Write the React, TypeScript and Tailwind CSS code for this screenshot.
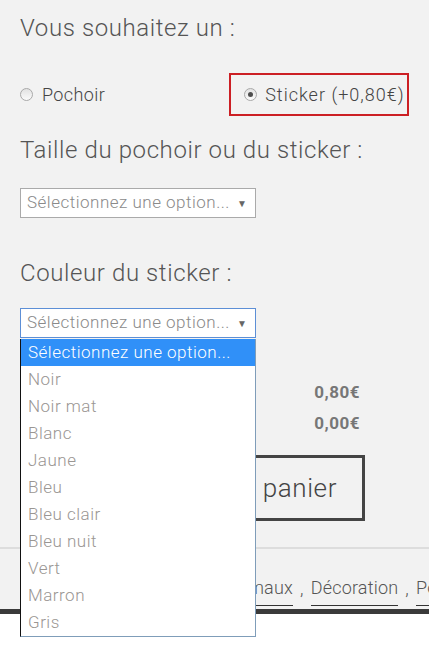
import React from 'react';

const COLORS = [
  'Noir',
  'Noir mat',
  'Blanc',
  'Jaune',
  'Bleu',
  'Bleu clair',
  'Bleu nuit',
  'Vert',
  'Marron',
  'Gris',
];

const FONT = "font-['Roboto',sans-serif]";

const Radio: React.FC<{ checked?: boolean }> = ({ checked }) => (
  <span className="w-[13px] h-[13px] rounded-full border border-[#a9a9a9] bg-gradient-to-b from-[#e2e2e2] to-[#fbfbfb] flex items-center justify-center shrink-0">
    {checked && <span className="w-[5px] h-[5px] rounded-full bg-[#4d4d4d]" />}
  </span>
);

const Select: React.FC<{ focused?: boolean }> = ({ focused }) => (
  <div
    className={`w-[236px] h-[30px] bg-white border flex items-center justify-between pl-[6px] pr-[8px] ${
      focused ? 'border-[#5d8fd6]' : 'border-[#aaaaaa]'
    }`}
  >
    <span className="text-[17px] font-light text-[#8a8a8a] tracking-[0.5px]">Sélectionnez une option...</span>
    <span className="text-[10px] text-[#666]">▼</span>
  </div>
);

export default function App() {
  return (
    <div className={`min-h-[647px] bg-white ${FONT}`}>
      <div className="relative bg-[#f2f2f2] px-5">
        <h2 className="pt-[13px] text-[24px] leading-[30px] font-light text-[#555] tracking-[0.6px]">Vous souhaitez un :</h2>

        {/* Type */}
        <div className="mt-[30px] flex items-center">
          <label className="w-[212px] flex items-center gap-[9px] text-[18px] font-light text-[#444] tracking-[0.4px]">
            <Radio />
            Pochoir
          </label>
          <label className="w-[182px] h-[43px] border-2 border-[#cc1f24] flex items-center gap-[8px] pl-[13px] text-[18px] font-light text-[#444] tracking-[1px]">
            <Radio checked />
            Sticker (+0,80€)
          </label>
        </div>

        <h2 className="mt-[19px] text-[24px] leading-[30px] font-light text-[#555] tracking-[0.6px]">Taille du pochoir ou du sticker :</h2>
        <div className="mt-[23px]">
          <Select />
        </div>

        <h2 className="mt-[40px] text-[24px] leading-[30px] font-light text-[#555] tracking-[0.6px]">Couleur du sticker :</h2>
        <div className="mt-[20px]">
          <Select focused />
        </div>

        {/* Prices */}
        <div className="mt-[42px] w-[340px] flex flex-col gap-[5px] text-[17px] font-bold text-[#777] tracking-[0.5px]">
          <div className="flex justify-between">
            <span className="font-light">Options :</span>
            <span>0,80€</span>
          </div>
          <div className="flex justify-between">
            <span className="font-light">Total :</span>
            <span>0,00€</span>
          </div>
        </div>

        {/* Add to cart */}
        <div className="mt-[19px] flex justify-end pr-[44px]">
          <button className="h-[66px] border-[3px] border-[#444] px-[25px] text-[26px] font-light text-[#444] tracking-[0.6px]">
            Ajouter au panier
          </button>
        </div>

        <div className="-mx-5 mt-[26px] h-[2px] bg-[#dddddd]" />

        {/* Tags */}
        <div className="mt-[28px] -mr-5 flex items-end whitespace-nowrap overflow-hidden text-[18px] font-light text-[#555] leading-[22px] tracking-[0.2px]">
          <span className="shrink-0 w-[273px] text-right border-b border-[#333] pb-[6px]">Animaux</span>
          <span className="shrink-0 mx-[7px] pb-[6px]">,</span>
          <span className="shrink-0 border-b border-[#333] pb-[6px]">Décoration</span>
          <span className="shrink-0 mx-[7px] pb-[6px]">,</span>
          <span className="shrink-0 border-b border-[#333] pb-[6px]">Pochoirs</span>
        </div>
        <div className="-mx-5 mt-[3px] h-[5px] bg-[#3a3a3a]" />

        {/* Open dropdown */}
        <ul className="absolute left-5 top-[339px] w-[236px] bg-white border-l border-l-[#111] border-r border-r-[#7f9db9] border-b border-b-[#7f9db9] text-[17px] font-light tracking-[0.5px]">
          <li className="h-[27px] flex items-center pl-[7px] bg-[#3090f8] text-white">Sélectionnez une option...</li>
          {COLORS.map(c => (
            <li key={c} className="h-[27px] flex items-center pl-[7px] text-[#9a9693]">
              {c}
            </li>
          ))}
        </ul>
      </div>
    </div>
  );
}
